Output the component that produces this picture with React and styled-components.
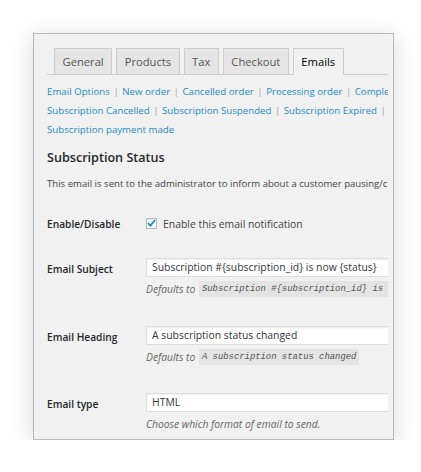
import styled, { createGlobalStyle } from "styled-components";

const GlobalStyle = createGlobalStyle`
  html, body {
    margin: 0;
    padding: 0;
    background: #fff;
  }
  body {
    font-family: "Open Sans", "Liberation Sans", sans-serif;
    color: #444;
  }
`;

const tabs = ["General", "Products", "Tax", "Checkout", "Emails"];

const linkRows = [
  ["Email Options", "New order", "Cancelled order", "Processing order", "Completed order"],
  ["Subscription Cancelled", "Subscription Suspended", "Subscription Expired", ""],
  ["Subscription payment made"],
];

function App() {
  return (
    <>
      <GlobalStyle />
      <Panel>
        <Clip>
          <TabRow>
            {tabs.map((t) => (
              <Tab key={t} $active={t === "Emails"}>
                {t}
              </Tab>
            ))}
          </TabRow>

          <Links>
            {linkRows.map((row, i) => (
              <LinkLine key={i}>
                {row.map((l, j) => (
                  <span key={j}>
                    {j > 0 && <Sep>|</Sep>}
                    {l && <Link href="#">{l}</Link>}
                  </span>
                ))}
              </LinkLine>
            ))}
          </Links>

          <Heading>Subscription Status</Heading>
          <Description>
            This email is sent to the administrator to inform about a customer pausing/cancelling a subscription.
          </Description>

          <CheckRow>
            <Label>Enable/Disable</Label>
            <CheckLabel>
              <CheckBox>
                <svg width="9" height="8" viewBox="0 0 9 8">
                  <path d="M1 4.2 L3.4 6.6 L8 1" fill="none" stroke="#1e8cbe" strokeWidth="1.8" />
                </svg>
              </CheckBox>
              Enable this email notification
            </CheckLabel>
          </CheckRow>

          <FieldRow $gap={27}>
            <Label $pad>Email Subject</Label>
            <Field>
              <Input>Subscription #{"{subscription_id}"} is now {"{status}"}</Input>
              <Help>
                Defaults to <Code>Subscription #{"{subscription_id}"} is now {"{status}"}</Code>
              </Help>
            </Field>
          </FieldRow>

          <FieldRow $gap={29}>
            <Label $pad>Email Heading</Label>
            <Field>
              <Input>A subscription status changed</Input>
              <Help>
                Defaults to <Code>A subscription status changed</Code>
              </Help>
            </Field>
          </FieldRow>

          <FieldRow $gap={28}>
            <Label $pad>Email type</Label>
            <Field>
              <Input>HTML</Input>
              <Help>Choose which format of email to send.</Help>
            </Field>
          </FieldRow>
        </Clip>
      </Panel>
    </>
  );
}

const Panel = styled.div`
  box-sizing: border-box;
  margin: 33px 0 0 33px;
  width: 361px;
  background: #f1f1f1;
  border: 1px solid #b9b9b9;
  box-shadow: 0 4px 22px rgba(0, 0, 0, 0.16);
  padding-bottom: 7px;
`;

const Clip = styled.div`
  margin-right: 5px;
  padding-left: 13px;
  overflow: hidden;
`;

const TabRow = styled.div`
  display: flex;
  gap: 4px;
  margin-top: 14px;
  padding-left: 7px;
  border-bottom: 1px solid #ccc;
  height: 26px;
`;

const Tab = styled.div`
  box-sizing: border-box;
  height: 27px;
  padding: 0 7.5px;
  border: 1px solid #ccc;
  border-bottom-color: ${(p) => (p.$active ? "#f1f1f1" : "#ccc")};
  background: ${(p) => (p.$active ? "#f1f1f1" : "#e5e5e5")};
  color: ${(p) => (p.$active ? "#000" : "#555")};
  font-size: 11.2px;
  font-weight: 400;
  line-height: 26px;
  white-space: nowrap;
`;

const Links = styled.div`
  margin-top: 7px;
  font-size: 9.7px;
  line-height: 19px;
`;

const LinkLine = styled.div`
  white-space: nowrap;
`;

const Link = styled.a`
  color: #1e8cbe;
  text-decoration: none;
`;

const Sep = styled.span`
  color: #a0a5aa;
  margin: 0 3.5px;
`;

const Heading = styled.h2`
  margin: 11px 0 0;
  font-size: 12.6px;
  font-weight: 600;
  line-height: 16px;
  color: #23282d;
  white-space: nowrap;
`;

const Description = styled.p`
  margin: 11px 0 0;
  font-size: 9.6px;
  line-height: 14px;
  color: #444;
  white-space: nowrap;
`;

const CheckRow = styled.div`
  display: grid;
  grid-template-columns: 99px 1fr;
  margin-top: 26px;
  line-height: 14px;
`;

const Label = styled.div`
  font-size: 10.2px;
  font-weight: 600;
  line-height: 14px;
  color: #23282d;
  padding-top: ${(p) => (p.$pad ? "4px" : "0")};
  white-space: nowrap;
`;

const CheckLabel = styled.label`
  display: flex;
  align-items: center;
  font-size: 10.4px;
  color: #444;
  white-space: nowrap;
`;

const CheckBox = styled.span`
  box-sizing: border-box;
  width: 11px;
  height: 11px;
  margin: -2px 6px 0 0;
  border: 1px solid #b4b9be;
  background: #fff;
  box-shadow: inset 0 1px 2px rgba(0, 0, 0, 0.08);
  display: flex;
  align-items: center;
  justify-content: center;
`;

const FieldRow = styled.div`
  display: grid;
  grid-template-columns: 99px 1fr;
  margin-top: ${(p) => p.$gap}px;
`;

const Field = styled.div`
  min-width: 0;
`;

const Input = styled.div`
  box-sizing: border-box;
  width: 288px;
  height: 19px;
  padding: 0 5px;
  background: #fff;
  border: 1px solid #ddd;
  box-shadow: inset 0 1px 2px rgba(0, 0, 0, 0.07);
  font-size: 10.4px;
  line-height: 17px;
  color: #32373c;
  white-space: nowrap;
  overflow: hidden;
`;

const Help = styled.div`
  margin-top: 4px;
  font-size: 10.3px;
  font-style: italic;
  line-height: 16px;
  color: #666;
  white-space: nowrap;
`;

const Code = styled.code`
  display: inline-block;
  margin-left: 1px;
  padding: 0 3px;
  background: #e4e4e4;
  font-family: "Liberation Mono", "DejaVu Sans Mono", monospace;
  font-size: 8.9px;
  font-style: italic;
  line-height: 16px;
  color: #555;
  vertical-align: top;
`;

export default App;
